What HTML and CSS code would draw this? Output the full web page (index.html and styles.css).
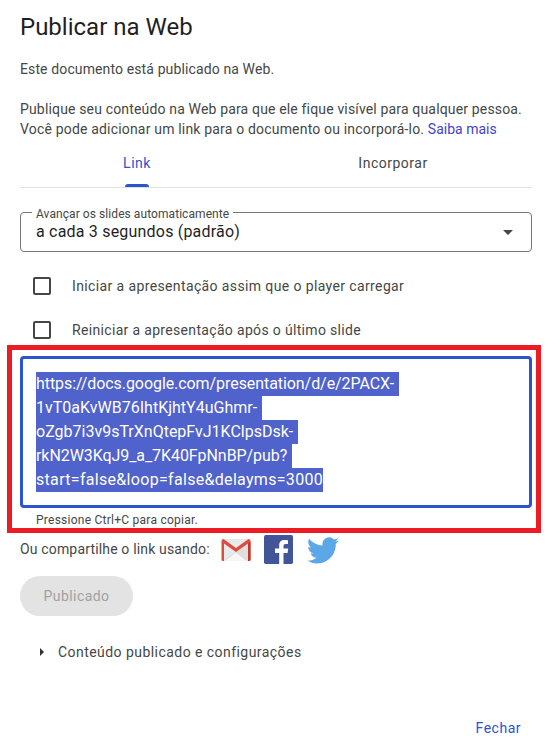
FILE: index.html
```html
<!DOCTYPE html>
<html lang="pt-BR">
<head>
    <meta charset="UTF-8">
    <meta name="viewport" content="width=device-width, initial-scale=1.0">
    <title>Publicar na Web</title>
    <link rel="stylesheet" href="styles.css">
</head>
<body>
    <div class="dialog">
        <h1>Publicar na Web</h1>
        <p class="status">Este documento está publicado na Web.</p>
        <p class="intro">Publique seu conteúdo na Web para que ele fique visível para qualquer pessoa.<br><span class="wide">Você pode adicionar um link para o documento ou incorporá-lo.</span> <a href="#">Saiba mais</a></p>

        <div class="tabs">
            <div class="tab active">Link</div>
            <div class="tab">Incorporar</div>
        </div>

        <div class="select">
            <span class="select-label">Avançar os slides automaticamente</span>
            <span class="select-value">a cada 3 segundos (padrão)</span>
            <span class="select-arrow"></span>
        </div>

        <label class="option"><span class="checkbox"></span>Iniciar a apresentação assim que o player carregar</label>
        <label class="option"><span class="checkbox"></span><span class="option-short">Reiniciar a apresentação após o último slide</span></label>

        <div class="highlight">
            <div class="url-box">
                <span class="url tight">https://docs.google.com/presentation/d/e/2PACX-</span>
                <span class="url loose">1vT0aKvWB76IhtKjhtY4uGhmr-</span>
                <span class="url">oZgb7i3v9sTrXnQtepFvJ1KClpsDsk-</span>
                <span class="url tight">rkN2W3KqJ9_a_7K40FpNnBP/pub?</span>
                <span class="url last">start=false&amp;loop=false&amp;delayms=3000</span>
            </div>
            <p class="hint">Pressione Ctrl+C para copiar.</p>
        </div>

        <div class="share">
            <span>Ou compartilhe o link usando:</span>
            <svg class="gmail" width="30" height="22" viewBox="0 0 30 22">
                <rect x="1" y="0" width="28" height="22" rx="1.5" fill="#e9e9e9"/>
                <path d="M4 22L15 13L26 22Z" fill="#f6f6f6"/>
                <path d="M4 21L15 13L26 21" fill="none" stroke="#d5d5d5" stroke-width=".7"/>
                <path d="M15 13.5L29 3V22H26Z" fill="#d9d9d9" opacity=".6"/>
                <path d="M.5 2Q.5 0 2.5 0L15 9L27.500 0Q29.500 0 29.500 2V20.500Q29.500 22 28 22H27V4.500L15 13L3 4.500V22H2Q.5 22 .5 20.500Z" fill="#db4d3f"/>
                <path d="M27 4.500L29.500 2.500V20.500Q29.500 22 28 22H27Z" fill="#c5392d"/>
            </svg>
            <svg class="facebook" width="29" height="29" viewBox="0 0 29 29">
                <rect width="29" height="29" rx="1.8" fill="#415597"/>
                <path d="M15.200 29V17.900H11V13.500H15.200V10.200C15.200 6.700 17.300 5 20.300 5C22 5 23.500 5.100 24 5.200V9.100H21.600C20 9.100 19.500 9.900 19.500 11.100V13.500H24.200L23.600 17.900H19.500V29Z" fill="#fff"/>
            </svg>
            <svg class="twitter" width="32" height="27" viewBox="0 0 24 20">
                <path d="M23.950 2.570a10 10 0 0 1-2.820.770 4.960 4.960 0 0 0 2.160-2.720c-.950.550-2 .950-3.130 1.180a4.920 4.920 0 0 0-8.380 4.480C7.690 6.090 4.070 4.130 1.640 1.160a4.820 4.820 0 0 0-.670 2.480c0 1.710.870 3.210 2.190 4.100a4.900 4.900 0 0 1-2.230-.620v.060a4.920 4.920 0 0 0 3.950 4.830 5 5 0 0 1-2.210.080 4.940 4.940 0 0 0 4.600 3.420A9.870 9.870 0 0 1 0 17.540a13.990 13.990 0 0 0 7.550 2.210c9.050 0 14-7.500 14-13.980 0-.210 0-.420-.020-.630a9.940 9.940 0 0 0 2.420-2.570z" fill="#5ba7e7"/>
            </svg>
        </div>

        <button class="published" disabled>Publicado</button>

        <div class="details"><span class="details-arrow"></span>Conteúdo publicado e configurações</div>

        <div class="footer"><a href="#">Fechar</a></div>
    </div>
</body>
</html>
```
FILE: styles.css
```css
* {
    margin: 0;
    padding: 0;
    box-sizing: border-box;
}
body {
    font-family: Roboto, "Liberation Sans", sans-serif;
    font-size: 14px;
    line-height: 20px;
    color: #444746;
    background: #fff;
}
.dialog {
    width: 546px;
    height: 753px;
    padding: 11px 14px 0 20px;
    overflow: hidden;
}
h1 {
    font-size: 24px;
    font-weight: 400;
    line-height: 32px;
    color: #1f1f1f;
}
.status {
    margin-top: 16px;
    letter-spacing: 0.12px;
}
.intro {
    margin-top: 20px;
    letter-spacing: 0.16px;
    white-space: nowrap;
}
.wide {
    letter-spacing: 0.18px;
}
.intro a {
    color: #4343c8;
    text-decoration: none;
    letter-spacing: 0;
}
.tabs {
    display: flex;
    width: 512px;
    height: 49px;
    padding-right: 22px;
    border-bottom: 1px solid #e1e3e1;
}
.tab {
    position: relative;
    flex: 0 0 234px;
    padding-top: 14px;
    text-align: center;
    letter-spacing: 0.5px;
}
.tab + .tab {
    flex-basis: 278px;
}
.tab.active {
    color: #2a55cf;
}
.tab.active::after {
    content: "";
    position: absolute;
    left: 105px;
    bottom: 0;
    width: 24px;
    height: 3px;
    border-radius: 3px 3px 0 0;
    background: #2a55cf;
}
.select {
    position: relative;
    display: flex;
    align-items: center;
    justify-content: space-between;
    width: 512px;
    height: 40px;
    margin-top: 24px;
    padding: 0 18px 0 15px;
    border: 1px solid #747775;
    border-radius: 4px;
}
.select-label {
    position: absolute;
    top: -7px;
    left: 11px;
    padding: 0 4px;
    background: #fff;
    font-size: 12px;
    line-height: 16px;
    letter-spacing: 0.07px;
}
.select-value {
    font-size: 16px;
    color: #1f1f1f;
    letter-spacing: 0.2px;
}
.select-arrow {
    border: 5px solid transparent;
    border-top-color: #444746;
    border-bottom: 0;
}
.option {
    display: flex;
    align-items: center;
    gap: 21px;
    height: 44px;
    padding-left: 13px;
    letter-spacing: 0.38px;
}
.select + .option {
    margin-top: 12px;
}
.option-short {
    letter-spacing: 0.33px;
}
.checkbox {
    width: 18px;
    height: 18px;
    border: 2px solid #444746;
    border-radius: 2px;
}
.highlight {
    width: 534px;
    height: 188px;
    margin: -7px 0 0 -13px;
    padding: 6px 4px 0 8px;
    border: 5px solid #ed1c24;
}
.url-box {
    width: 512px;
    height: 152px;
    padding: 13px;
    border: 3px solid #2a55cf;
    border-radius: 4px;
}
.url {
    display: block;
    width: fit-content;
    padding-right: 5px;
    background: #5062cc;
    color: #fff;
    font-size: 16px;
    line-height: 24px;
}
.url.tight {
    letter-spacing: -0.07px;
}
.url.loose {
    letter-spacing: 0.01px;
}
.url.last {
    padding-right: 0;
    letter-spacing: 0.31px;
}
.hint {
    padding: 4px 0 0 16px;
    font-size: 12px;
    line-height: 16px;
    letter-spacing: 0.25px;
}
.share {
    display: flex;
    align-items: center;
    height: 33px;
    letter-spacing: 0.16px;
}
.share span {
    margin-top: -2px;
}
.gmail {
    margin: 1px 0 0 11px;
}
.facebook {
    margin-left: 13px;
}
.twitter {
    margin: 1px 0 0 14px;
}
.published {
    display: block;
    width: 113px;
    height: 40px;
    margin-top: 10px;
    border: 0;
    border-radius: 20px;
    background: #e3e3e3;
    color: #a1a1a1;
    font: 14px Roboto, "Liberation Sans", sans-serif;
    letter-spacing: 0.45px;
}
.details {
    display: flex;
    align-items: center;
    gap: 14px;
    margin-top: 26px;
    padding-left: 20px;
    letter-spacing: 0.45px;
}
.details-arrow {
    border: 4px solid transparent;
    border-left-color: #333;
    border-right: 0;
}
.footer {
    margin-top: 56px;
    padding-right: 11px;
    text-align: right;
}
.footer a {
    color: #2a55cf;
    text-decoration: none;
    letter-spacing: 0.5px;
}
```
